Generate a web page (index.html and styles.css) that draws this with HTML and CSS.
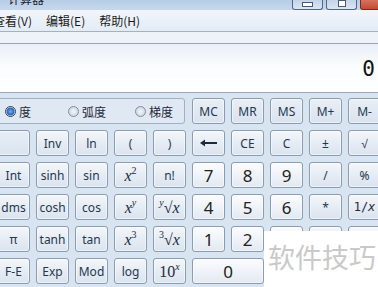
FILE: index.html
```html
<!DOCTYPE html>
<html lang="zh">

<head>
    <meta charset="utf-8">
    <title>计算器</title>
    <link rel="stylesheet" href="styles.css">
</head>

<body>
    <div class="window">

        <div class="titlebar">
            <span class="title">计算器</span>
            <div class="controls">
                <span class="ctl min"><i></i></span>
                <span class="ctl max"><i></i></span>
                <span class="ctl close"></span>
            </div>
        </div>

        <nav class="menubar">
            <span class="first">查看(V)</span>
            <span>编辑(E)</span>
            <span>帮助(H)</span>
        </nav>

        <div class="gap"></div>
        <div class="display"><span>0</span></div>

        <section class="keys">
            <div class="angles">
                <label class="radio on"><b></b>度</label>
                <label class="radio"><b></b>弧度</label>
                <label class="radio"><b></b>梯度</label>
            </div>
            <button class="key mem">MC</button>
            <button class="key mem">MR</button>
            <button class="key mem">MS</button>
            <button class="key mem">M+</button>
            <button class="key mem">M-</button>

            <button class="key blank"></button>
            <button class="key">Inv</button>
            <button class="key">ln</button>
            <button class="key">(</button>
            <button class="key">)</button>
            <button class="key">
                <svg width="18" height="8" viewBox="0 0 18 8"><path d="M17 4H3" stroke="#1e2b3c" stroke-width="2"/><path d="M0 4L5 0.5V7.5Z" fill="#1e2b3c"/></svg>
            </button>
            <button class="key">CE</button>
            <button class="key">C</button>
            <button class="key">±</button>
            <button class="key">√</button>

            <button class="key">Int</button>
            <button class="key">sinh</button>
            <button class="key">sin</button>
            <button class="key math"><i>x</i><sup>2</sup></button>
            <button class="key">n!</button>
            <button class="key num">7</button>
            <button class="key num">8</button>
            <button class="key num">9</button>
            <button class="key">/</button>
            <button class="key">%</button>

            <button class="key">dms</button>
            <button class="key">cosh</button>
            <button class="key">cos</button>
            <button class="key math"><i>x</i><sup><i>y</i></sup></button>
            <button class="key math"><sup><i>y</i></sup>√<i>x</i></button>
            <button class="key num">4</button>
            <button class="key num">5</button>
            <button class="key num">6</button>
            <button class="key">*</button>
            <button class="key math small">1/<i>x</i></button>

            <button class="key">π</button>
            <button class="key">tanh</button>
            <button class="key">tan</button>
            <button class="key math"><i>x</i><sup>3</sup></button>
            <button class="key math"><sup>3</sup>√<i>x</i></button>
            <button class="key num">1</button>
            <button class="key num">2</button>
            <button class="key num">3</button>
            <button class="key">-</button>
            <button class="key tall">=</button>

            <button class="key">F-E</button>
            <button class="key">Exp</button>
            <button class="key">Mod</button>
            <button class="key">log</button>
            <button class="key math">10<sup><i>x</i></sup></button>
            <button class="key num wide">0</button>
            <button class="key num">.</button>
            <button class="key">+</button>
        </section>

        <div class="watermark">软件技巧</div>
    </div>
</body>

</html>
```

FILE: styles.css
```css
body {
    margin: 0;
    padding: 0;
    overflow: hidden;
    font-family: "Noto Sans", "Noto Sans CJK SC", sans-serif;
}

.window {
    position: relative;
    width: 378px;
    height: 287px;
    overflow: hidden;
    background-color: #d9e4f1;
}

/* title bar, cut at the top */
.titlebar {
    height: 10px;
    display: flex;
    background: linear-gradient(#b7cde6, #c6d8ed);
    overflow: hidden;
}

.title {
    margin: -9px 0 0 8px;
    font: 12px/16px "Noto Sans CJK SC", sans-serif;
    color: #1b2432;
}

.controls {
    margin-left: auto;
    display: flex;
    gap: 3px;
}

.ctl {
    width: 29px;
    height: 9px;
    border: 1px solid #52678a;
    border-top: none;
    border-radius: 0 0 3px 3px;
    background: linear-gradient(#c3d3e8, #dbe6f3);
    display: flex;
    justify-content: center;
}

.ctl i {
    display: block;
    width: 9px;
    height: 3px;
    margin-top: 2px;
    border: 1px solid #4a5a72;
    background-color: #fff;
}

.ctl.max i {
    width: 6px;
    height: 5px;
    margin-top: 0;
}

.ctl.close {
    width: 17px;
    border-right: none;
    border-radius: 0 0 0 3px;
    background: linear-gradient(#d6725e, #c24a33);
    border-color: #7d2a1e;
}

/* menu */
.menubar {
    height: 21px;
    display: flex;
    gap: 14px;
    align-items: center;
    background: linear-gradient(#f2f6fb, #e3ebf5);
    border-bottom: 1px solid #a4b1c3;
    font: 12px "Noto Sans CJK SC", sans-serif;
    color: #1a1a1a;
}

.menubar .first {
    margin-left: -7px;
}

.gap {
    height: 11px;
    background-color: #eef3f9;
}

.display {
    height: 48px;
    border-top: 1px solid #97a6bb;
    border-bottom: 1px solid #97a6bb;
    background: linear-gradient(#e9eff7, #fafcfe 45%, #ffffff);
    display: flex;
    justify-content: flex-end;
    align-items: center;
    padding-right: 3px;
}

.display span {
    font: 21px "DejaVu Sans Mono", monospace;
    color: #111;
    margin-top: 2px;
}

/* keys */
.keys {
    display: grid;
    grid-template-columns: repeat(10, 33px);
    grid-auto-rows: 26px;
    gap: 6px;
    margin: 5px 0 0 -3px;
}

.angles {
    grid-column: 1 / 6;
    border: 1px solid #9fb0c7;
    border-radius: 3px;
    background-color: #dfe8f3;
    display: flex;
    align-items: center;
    padding-left: 7px;
    font: 12px "Noto Sans CJK SC", sans-serif;
    color: #1d2a3a;
    margin-right: 1px;
}

.radio {
    display: flex;
    align-items: center;
    gap: 3px;
    width: 63px;
    flex-shrink: 0;
}

.radio + .radio {
    width: 67px;
}

.radio b {
    width: 9px;
    height: 9px;
    border: 1px solid #7d8ea6;
    border-radius: 50%;
    background: radial-gradient(#f4f6f9, #c3cdd9);
}

.radio.on b {
    border-color: #2b3f5c;
    background: radial-gradient(#6fb0f0 0, #2a64b5 55%, #e6eef7 70%);
}

.key {
    border: 1px solid #8a9bb4;
    border-radius: 3px;
    background: linear-gradient(#f4f7fb, #e4ebf4 55%, #dbe4ef);
    box-shadow: inset 0 0 0 1px rgba(255, 255, 255, 0.5);
    color: #25374f;
    font: 12px "Noto Sans", sans-serif;
    padding: 0;
    display: flex;
    justify-content: center;
    align-items: center;
}

.key.mem {
    background: linear-gradient(#e8eef6, #d9e3ef);
}

.key.blank {
    background: linear-gradient(#e6edf6, #dbe4ef);
}

.key.num {
    background: linear-gradient(#fbfcfe, #eef2f8 55%, #e3e9f2);
    color: #222;
    font-size: 17px;
}

.key.math {
    display: block;
    text-align: center;
    font: 16px/26px "Liberation Serif", serif;
    color: #1e2b3c;
}

.key.math sup {
    font-size: 10px;
    vertical-align: 7px;
    line-height: 0;
}

.key.small {
    font: 12px/24px "DejaVu Sans Mono", monospace;
}

.key.wide {
    grid-column: span 2;
}

.key.tall {
    grid-row: span 2;
}

.watermark {
    position: absolute;
    left: 264px;
    top: 231px;
    width: 114px;
    height: 56px;
    background-color: #fff;
    color: #c9c9c9;
    font: 27px "Noto Sans CJK SC", sans-serif;
    padding: 10px 0 0 4px;
    box-sizing: border-box;
    line-height: 1.2;
}
```
